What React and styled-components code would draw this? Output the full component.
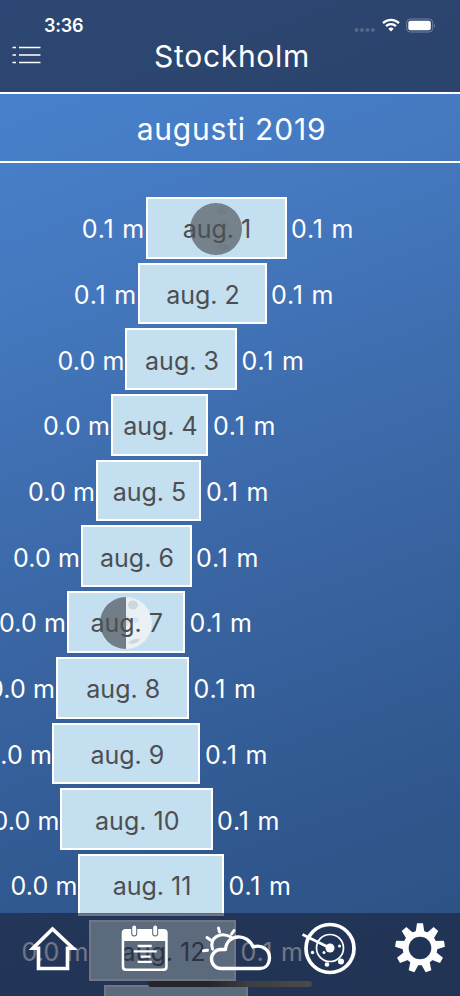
import React from 'react';
import styled, { createGlobalStyle } from 'styled-components';

const GlobalStyle = createGlobalStyle`
  * {
    box-sizing: border-box;
  }

  body {
    margin: 0;
    overflow: hidden;
    font-family: Inter, 'Liberation Sans', sans-serif;
  }
`;

const Screen = styled.div`
  position: relative;
  display: flex;
  flex-direction: column;
  width: 460px;
  height: 996px;
  overflow: hidden;
  color: #fff;
  background: linear-gradient(160deg, #4885d2 0%, #4579c0 25%, #3a66a4 55%, #30588f 80%, #2c5080 100%);
`;

const Header = styled.header`
  flex: none;
  height: 94px;
  background: rgba(27, 34, 57, 0.62);
  border-bottom: 2px solid #fff;
`;

const StatusBar = styled.div`
  display: flex;
  align-items: center;
  justify-content: space-between;
  height: 38px;
  padding: 14px 24px 0 44px;
`;

const Clock = styled.span`
  font-size: 18px;
  font-weight: 600;
  line-height: 24px;
  letter-spacing: -0.2px;
`;

const StatusIcons = styled.div`
  display: flex;
  align-items: center;
  gap: 6px;
  margin-top: -2px;
`;

const TitleBar = styled.div`
  display: grid;
  grid-template-columns: 60px 1fr 60px;
  align-items: center;
  height: 36px;
`;

const MenuButton = styled.div`
  display: flex;
  padding-left: 12px;
  margin-top: -2px;
`;

const Title = styled.h1`
  margin: 0;
  padding-left: 4px;
  text-align: center;
  font-size: 30px;
  font-weight: 380;
  line-height: 36px;
  letter-spacing: 0.7px;
`;

const Month = styled.h2`
  flex: none;
  height: 69px;
  margin: 0;
  padding-left: 3px;
  border-bottom: 2px solid #fff;
  text-align: center;
  font-size: 30px;
  font-weight: 380;
  line-height: 70px;
  letter-spacing: 0.8px;
`;

const DayList = styled.div`
  display: flex;
  flex-direction: column;
  gap: 4px;
  padding-top: 34px;
`;

const DayRow = styled.div`
  display: grid;
  flex: none;
  grid-template-columns: ${({ $low }) => $low}px ${({ $span }) => $span}px 1fr;
  align-items: center;
  height: 61.7px;
`;

const Level = styled.span`
  display: flex;
  justify-content: ${({ $before }) => ($before ? 'flex-end' : 'flex-start')};
  padding: ${({ $before }) => ($before ? '3px 0.5px 0 0' : '3px 0 0 4.5px')};
  white-space: nowrap;
  font-size: 25px;
  font-weight: 380;
  line-height: 30px;
  letter-spacing: ${({ $wide }) => ($wide ? '0.8px' : '0.1px')};
`;

const Range = styled.div`
  position: relative;
  display: flex;
  align-items: center;
  justify-content: center;
  height: 100%;
  padding: 3px 0 0 2px;
  border: 2px solid #fff;
  background: #c4dfef;
  color: #4c4f52;
  font-size: 25px;
  font-weight: 380;
  letter-spacing: 0;
  white-space: nowrap;
`;

const Moon = styled.svg`
  position: absolute;
  top: 2.5px;
  left: 50%;
  margin-left: -27px;
`;

const DayName = styled.span`
  position: relative;
`;

const TabBar = styled.nav`
  position: absolute;
  left: 0;
  bottom: 0;
  display: flex;
  width: 100%;
  height: 83px;
  padding-left: 6px;
  background: rgba(27, 34, 57, 0.62);
`;

const Tab = styled.div`
  display: flex;
  flex: none;
  width: 92px;
  justify-content: center;
  padding-top: 6px;
`;

const HomeIndicator = styled.div`
  position: absolute;
  left: 148px;
  bottom: 9px;
  width: 164px;
  height: 6px;
  border-radius: 3px;
  background: linear-gradient(90deg, #24262a 0%, #24262a 38%, #3c3d40 60%, #4b4a4b 100%);
`;

// low is where the bar starts, high is where it ends
const days = [
  { name: 'aug. 1', low: 145.5, high: 286.5, min: '0.1 m', moon: 'new' },
  { name: 'aug. 2', low: 137.5, high: 266.5, min: '0.1 m' },
  { name: 'aug. 3', low: 125, high: 237, min: '0.0 m' },
  { name: 'aug. 4', low: 110.5, high: 208.4, min: '0.0 m' },
  { name: 'aug. 5', low: 95.5, high: 201.4, min: '0.0 m' },
  { name: 'aug. 6', low: 80.5, high: 191.5, min: '0.0 m' },
  { name: 'aug. 7', low: 66.5, high: 185, min: '0.0 m', moon: 'first' },
  { name: 'aug. 8', low: 55.5, high: 189, min: '0.0 m' },
  { name: 'aug. 9', low: 52.4, high: 200.4, min: '0.0 m' },
  { name: 'aug. 10', low: 60, high: 212.5, min: '0.0 m' },
  { name: 'aug. 11', low: 78, high: 224, min: '0.0 m' },
  { name: 'aug. 12', low: 89, high: 236, min: '0.0 m' },
  { name: 'aug. 13', low: 104, high: 248, min: '0.0 m' },
];

function MoonPhase({ phase }) {
  if (phase === 'new') {
    return (
      <Moon width="54" height="54" viewBox="0 0 54 54">
        <circle cx="27" cy="27" r="26" fill="#75828b" />
        <ellipse cx="33" cy="9" rx="5" ry="4" fill="#717d86" />
        <circle cx="35" cy="23" r="4" fill="#717d86" />
        <ellipse cx="34" cy="45" rx="6" ry="3" fill="#717d86" />
      </Moon>
    );
  }
  return (
    <Moon width="54" height="54" viewBox="0 0 54 54">
      <path d="M27 1a26 26 0 0 0 0 52z" fill="#717e87" />
      <path d="M27 1a26 26 0 0 1 0 52z" fill="#e9f1f5" />
      <ellipse cx="34" cy="9" rx="5" ry="4.5" fill="#ccd8df" />
      <path d="M27 19a6 6 0 0 1 0 11z" fill="#d5e0e7" />
      <circle cx="37" cy="24" r="3" fill="#dae4ea" />
      <path d="M29 47c3-4 8-5 12-4-2 4-7 6-12 4z" fill="#ccd8df" />
    </Moon>
  );
}

function HomeIcon() {
  return (
    <svg width="54" height="56" viewBox="0 0 54 56" fill="none" stroke="#fff" strokeWidth="3.600">
      <path d="M27.500 10L8 29.200h5.500V49.500h29V29.200h5.500z" />
    </svg>
  );
}

function CalendarIcon() {
  return (
    <svg width="54" height="56" viewBox="-0.700 0 54 56">
      <path
        fillRule="evenodd"
        fill="#fff"
        d="M8 10h38a4 4 0 0 1 4 4v34a4 4 0 0 1-4 4H8a4 4 0 0 1-4-4V14a4 4 0 0 1 4-4zM6.500 22v25a2.500 2.500 0 0 0 2.500 2.500h36a2.500 2.500 0 0 0 2.500-2.500V22z"
      />
      <g stroke="#566276" strokeWidth="6" strokeLinecap="round">
        <path d="M16.500 9.500v5M37.500 9.500v5" />
      </g>
      <g stroke="#fff" strokeWidth="4" strokeLinecap="round">
        <path d="M16.500 8.500v6M37.500 8.500v6" />
      </g>
      <path d="M20 27h14M16 32.300h23M23 37.600h10M20 42.800h14" stroke="#fff" strokeWidth="2.300" />
    </svg>
  );
}

function WeatherIcon() {
  return (
    <svg
      width="72"
      height="56"
      viewBox="0 0 72 56"
      fill="none"
      stroke="#fff"
      strokeWidth="3.300"
      strokeLinecap="round"
      strokeLinejoin="round"
    >
      <path d="M21 49.500a9.500 9.500 0 0 1 0-19h4.500C26.500 14.500 48 14 53 28C62 25 70 31 69.500 39.500C69 46 65 49.500 60 49.500Z" />
      <path d="M12.500 30C9 19 20 12 31 18" strokeWidth="3" />
      <path d="M18.500 9L19.500 13M34 11.500L31.500 15M7 18.500L10.500 21M3.500 31.800L7.500 31.200" strokeWidth="3" />
    </svg>
  );
}

function RadarIcon() {
  return (
    <svg width="62" height="58" viewBox="0.500 0 62 58" fill="#fff">
      <g fill="none" stroke="#fff">
        <circle cx="33.500" cy="29.500" r="24" strokeWidth="3.700" />
        <circle cx="33.500" cy="29" r="13.500" strokeWidth="1.700" />
        <path d="M6 15.500L33.500 29" strokeWidth="2.700" />
      </g>
      <circle cx="33.500" cy="29" r="4.500" />
      <circle cx="43" cy="27" r="1.500" />
      <circle cx="27.500" cy="33.500" r="1.500" />
      <circle cx="16" cy="33.500" r="1.700" />
      <circle cx="30.500" cy="45.500" r="2.300" />
      <circle cx="44.500" cy="42.500" r="3" />
    </svg>
  );
}

function GearIcon() {
  return (
    <svg width="56" height="58" viewBox="-28 -29 56 58">
      <circle r="14.300" fill="none" stroke="#fff" strokeWidth="6" />
      {[0, 40, 80, 120, 160, 200, 240, 280, 320].map((angle) => (
        <path key={angle} d="M-4.500 -15L-3 -24.800H3L4.500 -15z" fill="#fff" transform={`rotate(${angle})`} />
      ))}
    </svg>
  );
}

export default function App() {
  return (
    <>
      <GlobalStyle />
      <Screen>
        <Header>
          <StatusBar>
            <Clock>3:36</Clock>
            <StatusIcons>
              <svg width="22" height="14" viewBox="0 0 22 14" fill="#566888">
                <circle cx="2.500" cy="12" r="2" />
                <circle cx="8" cy="12" r="2" />
                <circle cx="13.500" cy="12" r="2" />
                <circle cx="19" cy="12" r="2" />
              </svg>
              <svg width="18" height="14" viewBox="0 0 18 14" fill="none" stroke="#fff" strokeWidth="2.300">
                <path d="M1 5.200a11.500 11.500 0 0 1 16 0" />
                <path d="M4 8.200a7.200 7.200 0 0 1 10 0" />
                <path d="M6.300 10.800a4 4 0 0 1 5.400 0L9 13.500z" fill="#fff" stroke="none" />
              </svg>
              <svg width="30" height="15" viewBox="0 0 30 15">
                <rect x="0.700" y="1" width="26" height="13" rx="3.500" fill="none" stroke="#72819c" />
                <rect x="2.300" y="2.700" width="22.500" height="9.600" rx="2" fill="#fff" />
                <path d="M28 5.500q1.700 2 0 4z" fill="#8492aa" />
              </svg>
            </StatusIcons>
          </StatusBar>
          <TitleBar>
            <MenuButton>
              <svg width="29" height="20" viewBox="0 0 29 20" stroke="#fff" strokeWidth="1.600">
                <path d="M0.500 2.500h3.500M7 2.500h21.500M0.500 10h3.500M7 10h21.500M0.500 17.500h3.500M7 17.500h21.500" />
              </svg>
            </MenuButton>
            <Title>Stockholm</Title>
          </TitleBar>
        </Header>
        <Month>augusti 2019</Month>
        <DayList>
          {days.map((day) => (
            <DayRow key={day.name} $low={day.low} $span={day.high - day.low}>
              <Level $before $wide={day.min === '0.1 m'}>{day.min}</Level>
              <Range>
                {day.moon && <MoonPhase phase={day.moon} />}
                <DayName>{day.name}</DayName>
              </Range>
              <Level $wide>0.1 m</Level>
            </DayRow>
          ))}
        </DayList>
        <TabBar>
          <Tab><HomeIcon /></Tab>
          <Tab><CalendarIcon /></Tab>
          <Tab><WeatherIcon /></Tab>
          <Tab><RadarIcon /></Tab>
          <Tab><GearIcon /></Tab>
        </TabBar>
        <HomeIndicator />
      </Screen>
    </>
  );
}
